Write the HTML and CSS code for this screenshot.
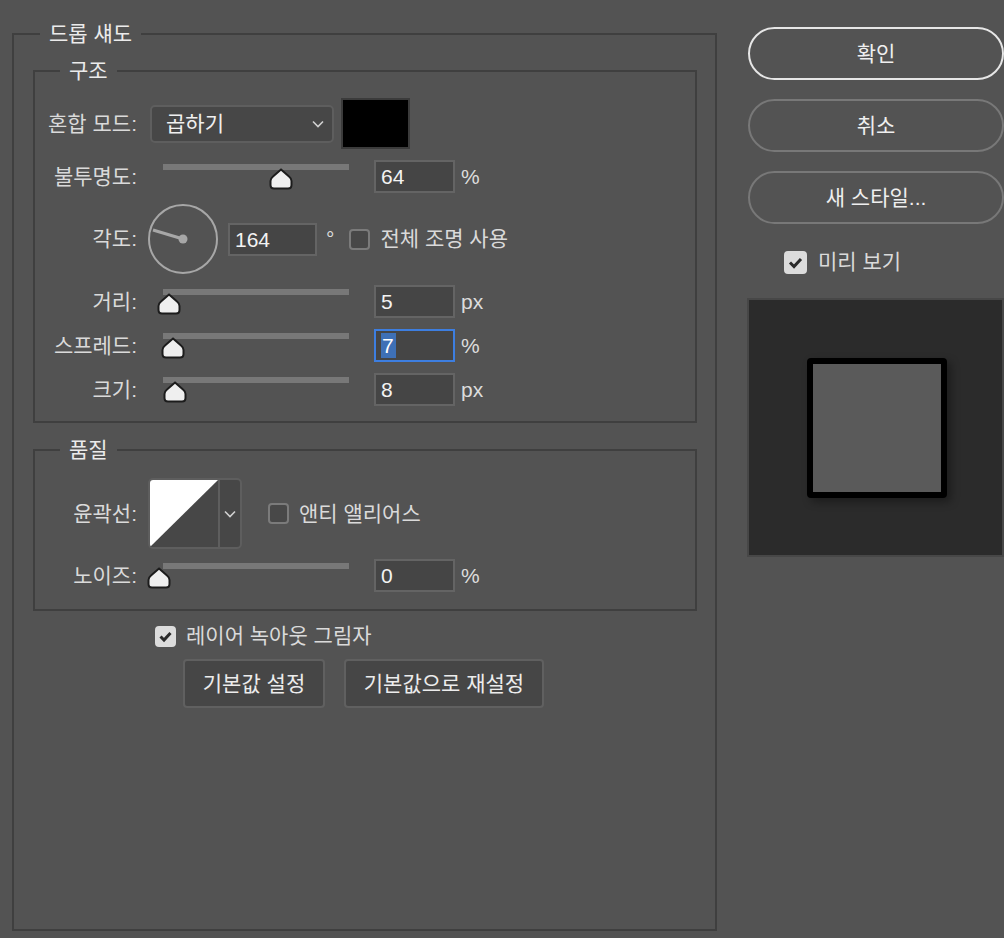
FILE: index.html
```html
<!DOCTYPE html>
<html lang="ko">
<head>
    <meta charset="UTF-8">
    <title>레이어 스타일 - 드롭 섀도</title>
    <link rel="stylesheet" href="styles.css">
</head>
<body>
<div class="dialog">
    <fieldset class="frame main-frame">
        <legend>드롭 섀도</legend>

        <!-- 구조 -->
        <fieldset class="frame group">
            <legend>구조</legend>

            <div class="row">
                <span class="label">혼합 모드:</span>
                <div class="select">
                    <span>곱하기</span>
                    <svg width="12" height="8" viewBox="0 0 12 8"><path d="M1 1.5 L6 6.5 L11 1.5" fill="none" stroke="#d0d0d0" stroke-width="1.6"/></svg>
                </div>
                <div class="swatch"></div>
            </div>

            <div class="row">
                <span class="label">불투명도:</span>
                <div class="slider">
                    <span class="thumb" style="left: 106px"><svg width="24" height="22" viewBox="0 0 24 22"><path d="M12 1.5 L20 8.5 Q22.5 10.5 22.5 13 L22.5 17 Q22.5 20.5 19 20.5 L5 20.5 Q1.5 20.5 1.5 17 L1.5 13 Q1.5 10.5 4 8.5 Z"/></svg></span>
                </div>
                <div class="num">64</div>
                <span class="unit">%</span>
            </div>

            <div class="row">
                <span class="label">각도:</span>
                <svg class="dial" width="70" height="70" viewBox="0 0 70 70">
                    <circle cx="35" cy="35" r="34" fill="none" stroke="#a7a7a7" stroke-width="2"/>
                    <line x1="5" y1="26" x2="35" y2="35" stroke="#a7a7a7" stroke-width="3"/>
                    <circle cx="35" cy="35" r="4.5" fill="#a7a7a7"/>
                </svg>
                <div class="num wide">164</div>
                <span class="unit deg">°</span>
                <span class="check global">
                    <span class="box"></span>
                    <span>전체 조명 사용</span>
                </span>
            </div>

            <div class="row">
                <span class="label">거리:</span>
                <div class="slider">
                    <span class="thumb" style="left: -6px"><svg width="24" height="22" viewBox="0 0 24 22"><path d="M12 1.5 L20 8.5 Q22.5 10.5 22.5 13 L22.5 17 Q22.5 20.5 19 20.5 L5 20.5 Q1.5 20.5 1.5 17 L1.5 13 Q1.5 10.5 4 8.5 Z"/></svg></span>
                </div>
                <div class="num">5</div>
                <span class="unit">px</span>
            </div>

            <div class="row">
                <span class="label">스프레드:</span>
                <div class="slider">
                    <span class="thumb" style="left: -2px"><svg width="24" height="22" viewBox="0 0 24 22"><path d="M12 1.5 L20 8.5 Q22.5 10.5 22.5 13 L22.5 17 Q22.5 20.5 19 20.5 L5 20.5 Q1.5 20.5 1.5 17 L1.5 13 Q1.5 10.5 4 8.5 Z"/></svg></span>
                </div>
                <div class="num focused"><span class="sel">7</span></div>
                <span class="unit">%</span>
            </div>

            <div class="row">
                <span class="label">크기:</span>
                <div class="slider">
                    <span class="thumb" style="left: 0px"><svg width="24" height="22" viewBox="0 0 24 22"><path d="M12 1.5 L20 8.5 Q22.5 10.5 22.5 13 L22.5 17 Q22.5 20.5 19 20.5 L5 20.5 Q1.5 20.5 1.5 17 L1.5 13 Q1.5 10.5 4 8.5 Z"/></svg></span>
                </div>
                <div class="num">8</div>
                <span class="unit">px</span>
            </div>
        </fieldset>

        <!-- 품질 -->
        <fieldset class="frame group quality">
            <legend>품질</legend>

            <div class="row">
                <span class="label">윤곽선:</span>
                <div class="contour">
                    <svg class="curve" width="68" height="67" viewBox="0 0 68 67" preserveAspectRatio="none">
                        <rect width="68" height="67" fill="#474747"/>
                        <polygon points="0,0 68,0 0,67" fill="#ffffff"/>
                    </svg>
                    <span class="drop">
                        <svg width="12" height="8" viewBox="0 0 12 8"><path d="M1 1.5 L6 6.5 L11 1.5" fill="none" stroke="#d0d0d0" stroke-width="1.6"/></svg>
                    </span>
                </div>
                <span class="check anti">
                    <span class="box"></span>
                    <span>앤티 앨리어스</span>
                </span>
            </div>

            <div class="row">
                <span class="label">노이즈:</span>
                <div class="slider">
                    <span class="thumb" style="left: -16px"><svg width="24" height="22" viewBox="0 0 24 22"><path d="M12 1.5 L20 8.5 Q22.5 10.5 22.5 13 L22.5 17 Q22.5 20.5 19 20.5 L5 20.5 Q1.5 20.5 1.5 17 L1.5 13 Q1.5 10.5 4 8.5 Z"/></svg></span>
                </div>
                <div class="num">0</div>
                <span class="unit">%</span>
            </div>
        </fieldset>

        <div class="check knockout">
            <span class="box on"><svg width="17" height="17" viewBox="0 0 17 17"><path d="M3.5 8.5 L7 12 L13.5 5" fill="none" stroke="#2a2a2a" stroke-width="3"/></svg></span>
            <span>레이어 녹아웃 그림자</span>
        </div>

        <div class="defaults">
            <button class="btn short">기본값 설정</button>
            <button class="btn long">기본값으로 재설정</button>
        </div>
    </fieldset>

    <aside class="side">
        <button class="pill primary">확인</button>
        <button class="pill">취소</button>
        <button class="pill">새 스타일...</button>

        <div class="check preview-toggle">
            <span class="box on"><svg width="19" height="19" viewBox="0 0 19 19"><path d="M4 9.5 L8 13.5 L15 6" fill="none" stroke="#2a2a2a" stroke-width="3"/></svg></span>
            <span>미리 보기</span>
        </div>

        <div class="preview">
            <div class="sample"></div>
        </div>
    </aside>
</div>
</body>
</html>
```

FILE: styles.css
```css
* {
    box-sizing: border-box;
}

body {
    margin: 0;
    background-color: #535353;
    color: #dadada;
    font-family: "Liberation Sans", "Noto Sans CJK KR", sans-serif;
    font-size: 21px;
    line-height: 24px;
    overflow: hidden;
}

.dialog {
    display: flex;
    align-items: flex-start;
    gap: 31px;
    padding: 22px 0 0 12px;
}

/* frames */
.frame {
    margin: 0;
    padding: 0;
    min-width: 0;
    border: 2px solid #3f3f3f;
}

.frame legend {
    margin-left: 26px;
    padding: 0 9px;
    line-height: 24px;
    color: #ebebeb;
}

.main-frame {
    width: 705px;
    height: 909px;
}

.group {
    margin: 13px 18px 0 19px;
    padding: 15px 0 15px;
    display: flex;
    flex-direction: column;
    gap: 11px;
}

.group legend {
    margin-left: 25px;
}

.group.quality {
    margin-top: 15px;
    padding: 16px 0 17px;
    gap: 10px;
}

/* rows */
.row {
    display: flex;
    align-items: center;
}

.label {
    flex: none;
    width: 102px;
    text-align: right;
    white-space: nowrap;
}

.select {
    width: 184px;
    height: 38px;
    margin-left: 13px;
    padding: 0 8px 0 14px;
    display: flex;
    align-items: center;
    justify-content: space-between;
    background-color: #474747;
    border: 2px solid #5e5e5e;
    border-radius: 5px;
    color: #f0f0f0;
}

.swatch {
    width: 69px;
    height: 51px;
    margin-left: 7px;
    background-color: #000;
    border: 2px solid #3b3b3b;
}

.slider {
    position: relative;
    flex: none;
    width: 186px;
    height: 26px;
    margin-left: 26px;
}

.slider::before {
    content: "";
    position: absolute;
    top: 0;
    left: 0;
    right: 0;
    height: 6px;
    background-color: #787878;
}

.thumb {
    position: absolute;
    top: 4px;
    width: 24px;
    height: 22px;
}

.thumb svg {
    display: block;
    fill: #efefef;
    stroke: #1c1c1c;
    stroke-width: 2;
}

.num {
    flex: none;
    width: 81px;
    height: 33px;
    margin-left: 25px;
    padding-left: 5px;
    background-color: #454545;
    border: 2px solid #646464;
    color: #f3f3f3;
    font-size: 21px;
    line-height: 29px;
}

.num.wide {
    width: 89px;
    margin-left: 10px;
}

.num.focused {
    border-color: #3d7ee0;
}

.sel {
    display: inline-block;
    background-color: #3e70b6;
    color: #fff;
    line-height: 25px;
    padding: 0 2px 0 1px;
    margin-top: 2px;
}

.unit {
    margin-left: 6px;
    color: #dcdcdc;
}

.unit.deg {
    margin-left: 9px;
}

.dial {
    flex: none;
    margin-left: 11px;
}

/* checkboxes */
.check {
    display: flex;
    align-items: center;
    gap: 10px;
}

.box {
    flex: none;
    width: 21px;
    height: 21px;
    border: 2px solid #7b7b7b;
    border-radius: 4px;
    background-color: #484848;
    display: flex;
    align-items: center;
    justify-content: center;
}

.box.on {
    background-color: #dcdcdc;
    border-color: #dcdcdc;
}

.global {
    margin-left: 15px;
}

.anti {
    margin-left: 26px;
}

.contour {
    flex: none;
    display: flex;
    width: 94px;
    height: 71px;
    margin-left: 11px;
    border: 2px solid #5e5e5e;
    border-radius: 5px;
    background-color: #474747;
    overflow: hidden;
}

.curve {
    display: block;
}

.drop {
    flex: 1;
    display: flex;
    align-items: center;
    justify-content: center;
    border-left: 2px solid #5e5e5e;
}

.knockout {
    margin: 13px 0 0 141px;
}

.defaults {
    display: flex;
    gap: 19px;
    margin: 11px 0 0 169px;
}

.btn {
    height: 49px;
    padding: 0;
    font: inherit;
    color: #ececec;
    background-color: #464646;
    border: 2px solid #606060;
    border-radius: 4px;
}

.btn.short {
    width: 142px;
}

.btn.long {
    width: 200px;
}

/* right column */
.side {
    flex: none;
    width: 256px;
    margin-top: 5px;
    display: flex;
    flex-direction: column;
    gap: 19px;
}

.pill {
    height: 53px;
    font: inherit;
    color: #efefef;
    background: transparent;
    border: 2px solid #787878;
    border-radius: 27px;
}

.pill.primary {
    border-color: #e6e6e6;
}

.preview-toggle {
    margin: 7px 0 0 36px;
    gap: 11px;
}

.preview-toggle .box {
    width: 23px;
    height: 23px;
}

.preview {
    height: 259px;
    margin-top: 5px;
    margin-left: -1px;
    display: flex;
    align-items: center;
    justify-content: center;
    background-color: #2b2b2b;
    border: 2px solid #474747;
}

.sample {
    width: 140px;
    height: 140px;
    margin-left: 3px;
    background-color: #5a5a5a;
    border: 6px solid #000;
    border-radius: 4px;
    box-shadow: 4px 4px 8px rgba(0, 0, 0, 0.35);
}
```
